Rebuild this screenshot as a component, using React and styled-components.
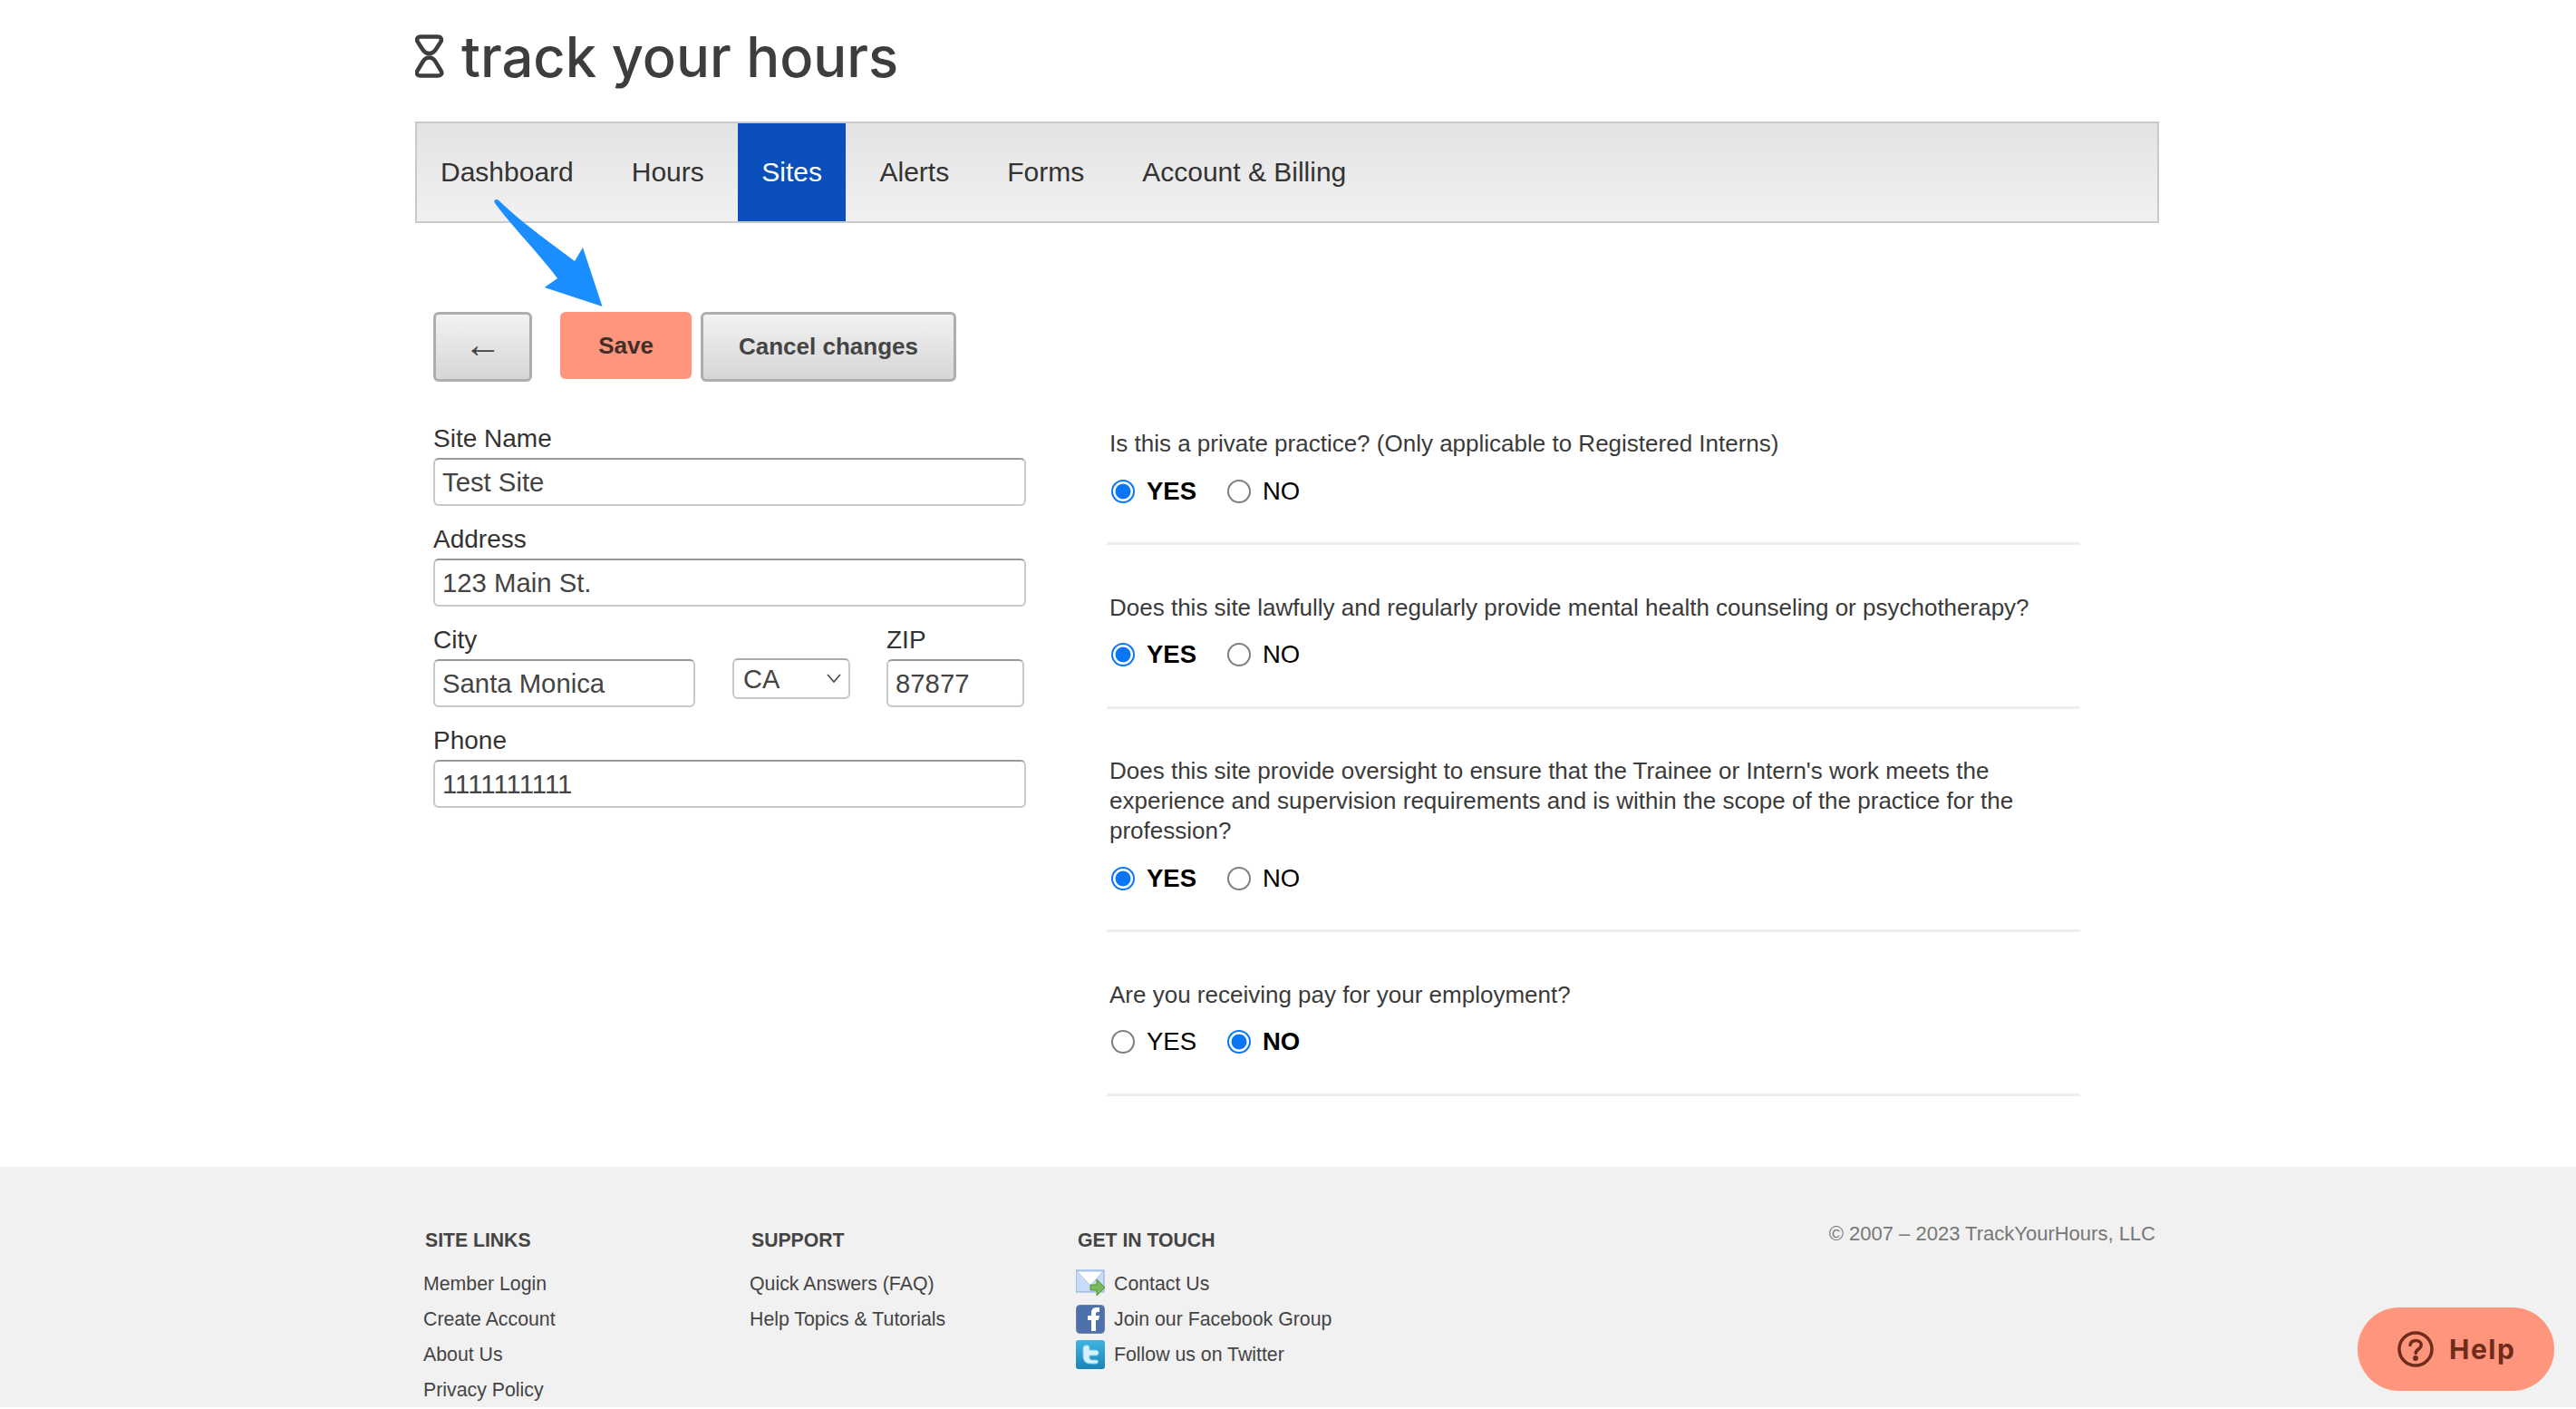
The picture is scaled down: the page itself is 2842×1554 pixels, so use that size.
import React from 'react'
import styled, { createGlobalStyle } from 'styled-components'

const GlobalStyle = createGlobalStyle`
  html, body {
    margin: 0;
    padding: 0;
    height: 1554px;
    overflow: hidden;
    background: #fff;
    font-family: "Liberation Sans", Arial, sans-serif;
    color: #3c3c3c;
  }
`

const Page = styled.div`
  position: relative;
  width: 2842px;
  height: 1554px;
  overflow: hidden;
`
const Container = styled.div`
  width: 1924px;
  margin-left: 458px;
`
const LogoRow = styled.a`
  display: flex;
  align-items: flex-start;
  gap: 19px;
  height: 134px;
  box-sizing: border-box;
  padding-top: 38px;
  color: #3d3d3d;
`
const LogoText = styled.span`
  font-family: Inter, sans-serif;
  font-weight: 500;
  font-size: 61.5px;
  line-height: 50px;
  white-space: nowrap;
`
const NavBar = styled.nav`
  display: flex;
  height: 112px;
  box-sizing: border-box;
  border: 2px solid #c9c9c9;
  background: linear-gradient(#e3e3e3, #f1f1f1);
`
const NavItem = styled.a`
  display: flex;
  align-items: center;
  padding: 0 ${p => (p.$active ? 26 : 32)}px;
  margin: 0 ${p => (p.$active ? 5.5 : 0)}px;
  font-size: 30px;
  color: ${p => (p.$active ? '#fff' : '#333')};
  background: ${p => (p.$active ? '#0b4fbb' : 'transparent')};
  &:first-child { padding-left: 26px; }
`
const Toolbar = styled.div`
  display: flex;
  align-items: flex-start;
  margin-top: 98px;
  padding-left: 20px;
`
const GreyButton = styled.button`
  height: 77px;
  box-sizing: border-box;
  padding: 0;
  border: 3px solid #aeaeae;
  border-radius: 6px;
  background: linear-gradient(#f2f2f2, #d6d6d6);
  font-family: inherit;
  font-weight: bold;
  font-size: 26px;
  color: #444;
  width: ${p => p.$width}px;
`
const BackButton = styled(GreyButton)`
  font-weight: normal;
  font-size: 42px;
  line-height: 1;
  padding-bottom: 5px;
  margin-right: 31px;
`
const SaveButton = styled.button`
  width: 145px;
  height: 74px;
  margin-right: 10px;
  border: 0;
  border-radius: 6px;
  background: #ff957d;
  font-family: inherit;
  font-weight: bold;
  font-size: 26px;
  color: #40302a;
`
const Columns = styled.div`
  display: flex;
  align-items: flex-start;
  padding-bottom: 26px;
`
const LeftColumn = styled.form`
  width: 654px;
  margin-left: 20px;
  padding-top: 46px;
  flex: none;
`
const RightColumn = styled.div`
  width: 1074px;
  margin-left: 89px;
  padding-top: 52px;
  flex: none;
`
const Field = styled.label`
  display: block;
  width: ${p => (p.$width ? `${p.$width}px` : 'auto')};
  margin-bottom: 20px;
  font-size: 28px;
  line-height: 34px;
  color: #333;
`
const Input = styled.input`
  display: block;
  width: 100%;
  height: 53px;
  box-sizing: border-box;
  margin-top: 4px;
  padding: 0 8px;
  border: 2px solid #c8c8c8;
  border-top-color: #999;
  border-radius: 6px;
  background: #fff;
  font-family: inherit;
  font-size: 29.3px;
  color: #444;
  outline: none;
`
const CityRow = styled.div`
  display: flex;
  align-items: flex-start;
`
const SelectWrap = styled.div`
  position: relative;
  width: 130px;
  height: 45px;
  margin: 37px 40px 0 41px;
`
const Select = styled.select`
  display: block;
  width: 100%;
  height: 100%;
  box-sizing: border-box;
  padding: 0 10px;
  appearance: none;
  border: 2px solid #c8c8c8;
  border-top-color: #aaa;
  border-radius: 6px;
  background: #fff;
  font-family: inherit;
  font-size: 29px;
  color: #444;
`
const Chevron = styled.svg`
  position: absolute;
  right: 10px;
  top: 16px;
  width: 16px;
  height: 12px;
  pointer-events: none;
`
const Question = styled.div`
  padding-bottom: 40px;
  margin-bottom: 52.5px;
  border-bottom: 3px solid #eeeeee;
`
const QuestionText = styled.p`
  margin: 0 0 19px;
  padding-left: 3px;
  max-width: 1020px;
  font-size: 26px;
  line-height: 33px;
  color: #3a3a3a;
`
const RadioRow = styled.div`
  display: flex;
  align-items: center;
  height: 33px;
  padding-left: 5px;
`
const RadioLabel = styled.label`
  display: flex;
  align-items: center;
  gap: 13px;
  width: 128px;
  font-size: 27.5px;
  color: #000;
  font-weight: ${p => (p.$on ? 'bold' : 'normal')};
`
const Radio = styled.input`
  appearance: none;
  width: 26px;
  height: 26px;
  margin: 0;
  flex: none;
  box-sizing: border-box;
  border-radius: 50%;
  border: 2px solid #7f7f7f;
  background: #fff;
  &:checked {
    border-color: #0a76f6;
    background: radial-gradient(circle, #0a76f6 0 8px, #fff 8.8px);
  }
`
const Footer = styled.footer`
  height: 265px;
  background: #f1f1f1;
`
const FooterInner = styled(Container)`
  display: flex;
  padding-top: 59px;
`
const FooterColumn = styled.div`
  width: 360px;
  padding-top: 2px;
  &:first-child { margin-left: 9px; }
`
const FooterTitle = styled.h4`
  margin: 0 0 9.5px 2px;
  font-size: 21.2px;
  line-height: 39px;
  font-weight: bold;
  color: #444;
`
const FooterLink = styled.a`
  display: flex;
  align-items: center;
  gap: 10px;
  height: 39px;
  font-size: 21.3px;
  color: #444;
  white-space: nowrap;
`
const IconBox = styled.svg`
  width: 32px;
  height: 32px;
  flex: none;
`
const Copyright = styled.div`
  margin-left: auto;
  margin-right: 4px;
  font-size: 22px;
  line-height: 30px;
  color: #777;
  white-space: nowrap;
`
const HelpButton = styled.button`
  position: fixed;
  left: 2601px;
  top: 1442px;
  display: flex;
  align-items: center;
  gap: 17px;
  width: 217px;
  height: 92px;
  padding: 0 0 0 44px;
  box-sizing: border-box;
  border: 0;
  border-radius: 46px;
  background: #ff957d;
  font-family: Inter, sans-serif;
  font-weight: 700;
  font-size: 30px;
  letter-spacing: 1.5px;
  color: #6f2c1b;
`
const ArrowMark = styled.svg`
  position: absolute;
  left: 530px;
  top: 205px;
  width: 150px;
  height: 150px;
  overflow: visible;
`

const HourGlass = () => (
  <svg width="32" height="48" viewBox="0 0 32 48" fill="none" stroke="#3d3d3d" strokeWidth="4.500" strokeLinejoin="round">
    <path d="M6 2.500H25C28.500 2.500 30 5.500 28 8.500L22.500 17C20.500 20 18.500 21 15.500 21C12.500 21 10.500 20 8.500 17L3 8.500C1 5.500 2.500 2.500 6 2.500Z" />
    <path d="M15.500 25.500C18.500 25.500 20.500 26.500 22.500 30L28.500 40C30.500 43 28.500 45.500 25.500 45.500H5.500C2.500 45.500 .8 43 2.500 40L8.500 30C10.500 26.500 12.500 25.500 15.500 25.500Z" />
  </svg>
)

const MailIcon = () => (
  <IconBox viewBox="0 0 32 32">
    <rect x="0" y="1" width="31" height="24" fill="#c9dcf7" stroke="#86a7dc" strokeWidth="1" />
    <path d="M1 2L16 18L30 2Z" fill="#fff" stroke="#a9c2ea" strokeWidth="1" />
    <path d="M16 17h7v-6l9 9-9 9v-6h-7z" fill="#7cb75a" stroke="#4b9a33" strokeWidth="1" />
  </IconBox>
)

const FacebookIcon = () => (
  <IconBox viewBox="0 0 32 32">
    <rect x="0.500" y="0.500" width="31" height="31" rx="4" fill="#4f71ab" stroke="#6f7f9a" />
    <path d="M17 29V17h-4v-5h4V9c0-4 2-6 6-6h3v5h-2c-2 0-2 1-2 2v2h4l-1 5h-3v12z" fill="#fff" />
  </IconBox>
)

const TwitterIcon = () => (
  <IconBox viewBox="0 0 32 32">
    <defs>
      <linearGradient id="tw" x1="0" y1="0" x2="0" y2="1">
        <stop offset="0" stopColor="#3fb4e0" />
        <stop offset="1" stopColor="#1b84b4" />
      </linearGradient>
    </defs>
    <rect width="32" height="32" rx="3" fill="url(#tw)" />
    <path d="M10 6c3-1 5 0 5 3v2h7c2 0 3 1 3 3s-1 3-3 3h-7v2c0 2 1 3 3 3h5c2 0 2 4-1 4h-6c-5 0-8-3-8-8V8c0-1 1-2 2-2z" fill="#d7f1fc" stroke="#6fcdf2" strokeWidth="1" />
  </IconBox>
)

const questions = [
  { text: 'Is this a private practice? (Only applicable to Registered Interns)', yes: true },
  { text: 'Does this site lawfully and regularly provide mental health counseling or psychotherapy?', yes: true },
  { text: "Does this site provide oversight to ensure that the Trainee or Intern's work meets the experience and supervision requirements and is within the scope of the practice for the profession?", yes: true },
  { text: 'Are you receiving pay for your employment?', yes: false },
]

const navItems = ['Dashboard', 'Hours', 'Sites', 'Alerts', 'Forms', 'Account & Billing']

export default function App() {
  return (
    <Page>
      <GlobalStyle />
      <Container>
        <LogoRow>
          <HourGlass />
          <LogoText>track your hours</LogoText>
        </LogoRow>
        <NavBar>
          {navItems.map(item => (
            <NavItem key={item} $active={item === 'Sites'}>{item}</NavItem>
          ))}
        </NavBar>
        <Toolbar>
          <BackButton $width={109}>←</BackButton>
          <SaveButton>Save</SaveButton>
          <GreyButton $width={282}>Cancel changes</GreyButton>
        </Toolbar>
        <Columns>
          <LeftColumn>
            <Field>Site Name<Input defaultValue="Test Site" /></Field>
            <Field>Address<Input defaultValue="123 Main St." /></Field>
            <CityRow>
              <Field $width={289}>City<Input defaultValue="Santa Monica" /></Field>
              <SelectWrap>
                <Select defaultValue="CA"><option>CA</option></Select>
                <Chevron viewBox="0 0 16 12" fill="none" stroke="#444" strokeWidth="1.500"><path d="M1 2l7 8 7-8" /></Chevron>
              </SelectWrap>
              <Field $width={152}>ZIP<Input defaultValue="87877" /></Field>
            </CityRow>
            <Field>Phone<Input defaultValue="1111111111" /></Field>
          </LeftColumn>
          <RightColumn>
            {questions.map((q, i) => (
              <Question key={i}>
                <QuestionText>{q.text}</QuestionText>
                <RadioRow>
                  <RadioLabel $on={q.yes}><Radio type="radio" name={`q${i}`} defaultChecked={q.yes} />YES</RadioLabel>
                  <RadioLabel $on={!q.yes}><Radio type="radio" name={`q${i}`} defaultChecked={!q.yes} />NO</RadioLabel>
                </RadioRow>
              </Question>
            ))}
          </RightColumn>
        </Columns>
      </Container>
      <Footer>
        <FooterInner>
          <FooterColumn>
            <FooterTitle>SITE LINKS</FooterTitle>
            <FooterLink>Member Login</FooterLink>
            <FooterLink>Create Account</FooterLink>
            <FooterLink>About Us</FooterLink>
            <FooterLink>Privacy Policy</FooterLink>
          </FooterColumn>
          <FooterColumn>
            <FooterTitle>SUPPORT</FooterTitle>
            <FooterLink>Quick Answers (FAQ)</FooterLink>
            <FooterLink>Help Topics &amp; Tutorials</FooterLink>
          </FooterColumn>
          <FooterColumn>
            <FooterTitle>GET IN TOUCH</FooterTitle>
            <FooterLink><MailIcon />Contact Us</FooterLink>
            <FooterLink><FacebookIcon />Join our Facebook Group</FooterLink>
            <FooterLink><TwitterIcon />Follow us on Twitter</FooterLink>
          </FooterColumn>
          <Copyright>© 2007 – 2023 TrackYourHours, LLC</Copyright>
        </FooterInner>
      </Footer>
      <ArrowMark viewBox="530 205 150 150">
        <path d="M546 224C544 220 548 219 550 221C575 245 610 270 634 288L643 273L664.500 338L600.700 317L615 307C595 280 565 250 546 224Z" fill="#1b8eff" />
      </ArrowMark>
      <HelpButton>
        <svg width="40" height="40" viewBox="0 0 40 40" fill="none" stroke="#6f2c1b" strokeWidth="3.500" strokeLinecap="round">
          <circle cx="20" cy="20" r="18" />
          <path d="M14 15.500c.6-3.300 3-5 6.200-5 3.400 0 6 2 6 5 0 4.500-6 4.500-6 9" />
          <circle cx="20" cy="30" r="1.200" fill="#6f2c1b" />
        </svg>
        Help
      </HelpButton>
    </Page>
  )
}
